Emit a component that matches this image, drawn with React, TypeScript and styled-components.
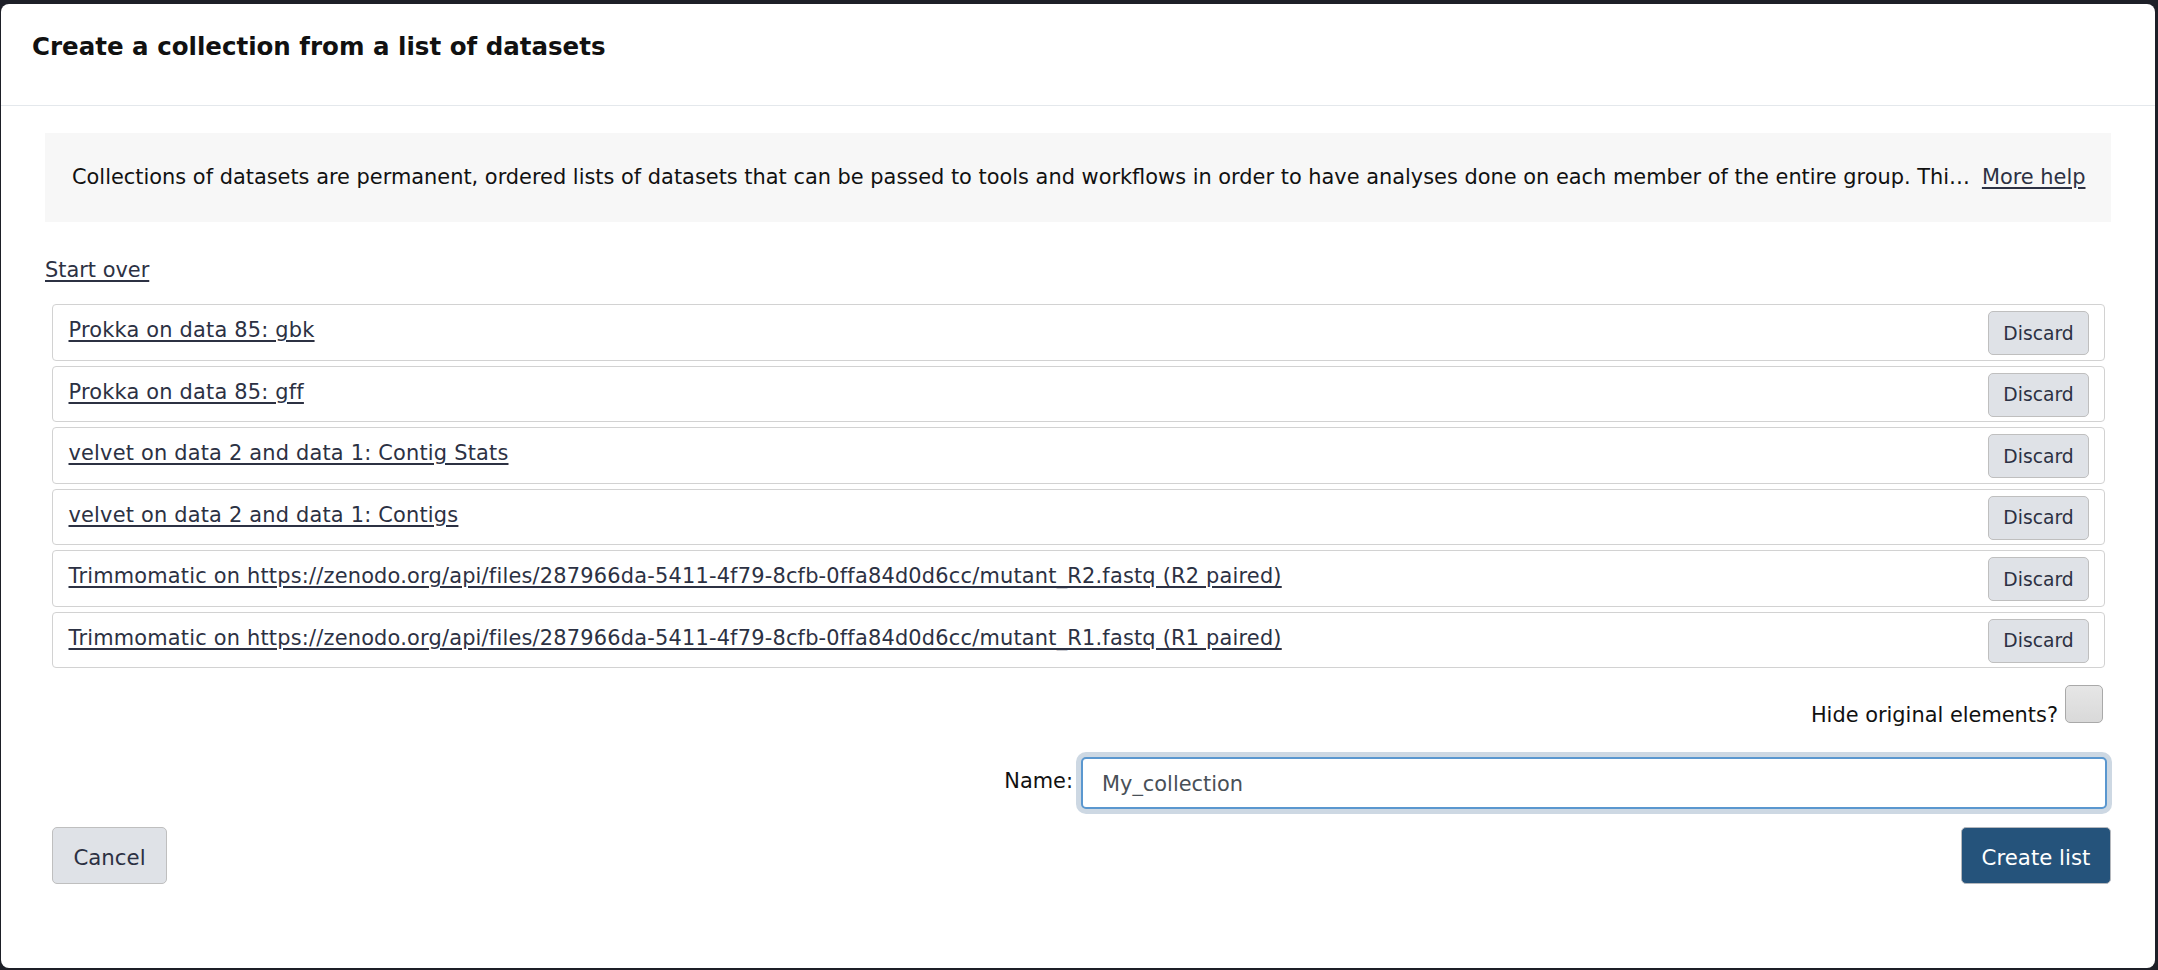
import React from "react";
import styled, { createGlobalStyle } from "styled-components";

const Global = createGlobalStyle`
  html, body { margin: 0; padding: 0; }
  body {
    background: #1d1f27;
    font-family: "DejaVu Sans", "Liberation Sans", sans-serif;
    font-size: 20.9px;
    color: #1a1a1a;
  }
  * { box-sizing: border-box; }
`;

const Backdrop = styled.div`
  width: 2158px;
  height: 970px;
  padding: 4px 3px 2px 1px;
  display: flex;
`;

const Modal = styled.div`
  flex: 1;
  background: #fff;
  border-radius: 8px;
  display: flex;
  flex-direction: column;
  overflow: hidden;
`;

const Header = styled.div`
  padding: 25px 31px 40px;
  border-bottom: 1px solid #e4e8ec;
`;

const Title = styled.h5`
  margin: 0;
  font-size: 24.5px;
  line-height: 36px;
  font-weight: bold;
  color: #111;
`;

const Body = styled.div`
  padding: 27px 44px 0;
  display: flex;
  flex-direction: column;
`;

const HelpBox = styled.div`
  height: 89px;
  background: #f7f7f7;
  display: flex;
  align-items: center;
  justify-content: space-between;
  padding: 0 26px 0 27px;
  white-space: nowrap;
  overflow: hidden;
  line-height: 31px;
`;

const HelpText = styled.span`
  flex: none;
  color: #111;
`;

const Link = styled.a`
  color: #2c3143;
  text-decoration: underline;
  text-underline-offset: 3px;
  cursor: pointer;
`;

const HelpLink = styled(Link)`
  flex: none;
  margin-left: 12px;
`;

const StartOver = styled(Link)`
  align-self: flex-start;
  margin-top: 33px;
  line-height: 31px;
`;

const List = styled.div`
  margin: 18px 6px 0 7px;
  display: flex;
  flex-direction: column;
  gap: 5px;
`;

const Row = styled.div`
  height: 56.5px;
  border: 1.5px solid #d2d2d2;
  border-radius: 4px;
  display: flex;
  align-items: center;
  justify-content: space-between;
  padding: 2px 15px 0 15.5px;
`;

const RowLink = styled(Link)`
  line-height: 24px;
  padding-bottom: 6px;
  letter-spacing: 0.2px;
`;

const GreyButton = styled.button`
  font-family: inherit;
  background: #dfe2e7;
  border: 1.5px solid #bfbfbf;
  border-radius: 5px;
  color: #2c3143;
  cursor: pointer;
`;

const DiscardButton = styled(GreyButton)`
  width: 101px;
  height: 44px;
  font-size: 18.7px;
  padding: 0;
`;

const HideRow = styled.div`
  display: flex;
  justify-content: flex-end;
  align-items: flex-start;
  gap: 7px;
  margin-top: 17px;
  padding-right: 8px;
`;

const HideLabel = styled.label`
  margin-top: 18px;
  line-height: 24px;
  color: #111;
`;

const Checkbox = styled.span`
  width: 38px;
  height: 38px;
  border-radius: 5px;
  border: 1.5px solid #a9a9a9;
  background: linear-gradient(#e6e6e6, #d9d9d9);
  display: inline-block;
`;

const NameRow = styled.div`
  display: flex;
  justify-content: flex-end;
  align-items: center;
  gap: 8px;
  margin-top: 30px;
`;

const NameLabel = styled.label`
  color: #111;
  margin-bottom: 4px;
`;

const NameInput = styled.input`
  width: 1026px;
  height: 52px;
  margin-right: 4px;
  border: 2px solid #5a97cf;
  border-radius: 5px;
  box-shadow: 0 0 0 5px #cdd8e3;
  font-family: inherit;
  font-size: 20.9px;
  color: #495057;
  padding: 2px 19px 0;
  outline: none;
`;

const Footer = styled.div`
  display: flex;
  justify-content: space-between;
  margin: 18px 0 0 7px;
`;

const CancelButton = styled(GreyButton)`
  width: 115px;
  height: 57px;
  font-size: 21.3px;
  padding: 3px 0 0;
`;

const PrimaryButton = styled.button`
  font-family: inherit;
  width: 150px;
  height: 57px;
  font-size: 21.3px;
  background: #25537b;
  border: 1.5px solid #b5b8bd;
  border-radius: 5px;
  color: #fff;
  padding: 3px 0 0;
  cursor: pointer;
`;

const items = [
  "Prokka on data 85: gbk",
  "Prokka on data 85: gff",
  "velvet on data 2 and data 1: Contig Stats",
  "velvet on data 2 and data 1: Contigs",
  "Trimmomatic on https://zenodo.org/api/files/287966da-5411-4f79-8cfb-0ffa84d0d6cc/mutant_R2.fastq (R2 paired)",
  "Trimmomatic on https://zenodo.org/api/files/287966da-5411-4f79-8cfb-0ffa84d0d6cc/mutant_R1.fastq (R1 paired)",
];

export default function App() {
  return (
    <Backdrop>
      <Global />
      <Modal>
        <Header>
          <Title>Create a collection from a list of datasets</Title>
        </Header>
        <Body>
          <HelpBox>
            <HelpText>
              Collections of datasets are permanent, ordered lists of datasets that can be passed to tools and workflows in order to have analyses done on each member of the entire group. Thi…
            </HelpText>
            <HelpLink>More help</HelpLink>
          </HelpBox>
          <StartOver>Start over</StartOver>
          <List>
            {items.map((t) => (
              <Row key={t}>
                <RowLink>{t}</RowLink>
                <DiscardButton>Discard</DiscardButton>
              </Row>
            ))}
          </List>
          <HideRow>
            <HideLabel>Hide original elements?</HideLabel>
            <Checkbox />
          </HideRow>
          <NameRow>
            <NameLabel>Name:</NameLabel>
            <NameInput defaultValue="My_collection" />
          </NameRow>
          <Footer>
            <CancelButton>Cancel</CancelButton>
            <PrimaryButton>Create list</PrimaryButton>
          </Footer>
        </Body>
      </Modal>
    </Backdrop>
  );
}
